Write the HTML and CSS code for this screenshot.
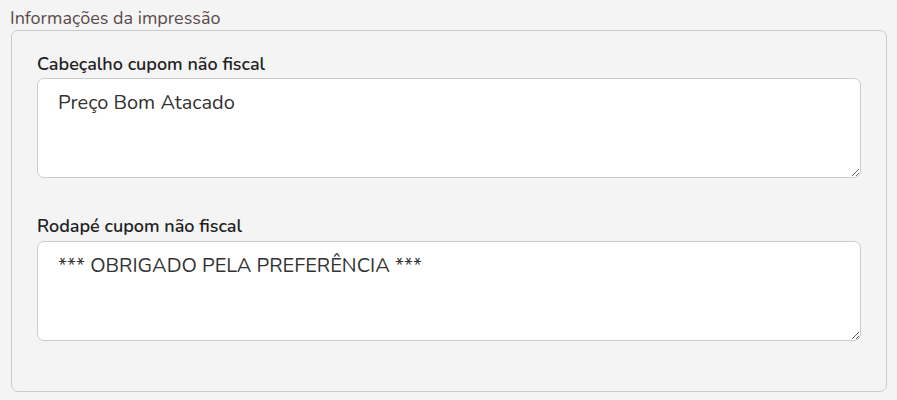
FILE: index.html
```html
<!DOCTYPE html>
<html lang="pt-BR">
<head>
<meta charset="utf-8">
<link rel="stylesheet" href="styles.css">
</head>
<body>
<section class="group">
  <div class="group-title">Informações da impressão</div>
  <div class="group-box">
    <div class="field">
      <label class="field-label" for="cab">Cabeçalho cupom não fiscal</label>
      <textarea id="cab" class="field-input">Preço Bom Atacado</textarea>
    </div>
    <div class="field">
      <label class="field-label" for="rod">Rodapé cupom não fiscal</label>
      <textarea id="rod" class="field-input">*** OBRIGADO PELA PREFERÊNCIA ***</textarea>
    </div>
  </div>
</section>
</body>
</html>
```

FILE: styles.css
```css
html, body {
  margin: 0;
  padding: 0;
  background: #f4f4f4;
}
body {
  font-family: "Nunito", "Noto Sans", "Open Sans", sans-serif;
  padding: 6px 10px 8px 11px;
}
.group-title {
  font-size: 18px;
  line-height: 24px;
  color: #5b4b4b;
  margin-left: -1px;
}
.group-box {
  border: 1px solid #cccccc;
  border-radius: 7px;
  padding: 21px 25px 50px 25px;
  display: flex;
  flex-direction: column;
  gap: 36px;
}
.field {
  display: flex;
  flex-direction: column;
  gap: 2px;
}
.field + .field .field-label {
  margin-bottom: 1px;
}
.field-label {
  font-size: 18px;
  line-height: 24px;
  font-weight: 600;
  color: #222;
}
.field-input {
  box-sizing: border-box;
  height: 100px;
  width: 100%;
  border: 1px solid #cccccc;
  border-radius: 7px;
  background: #fff;
  padding: 10px 20px;
  font-family: inherit;
  font-size: 20px;
  line-height: 27px;
  color: #333;
  resize: vertical;
  outline: none;
}
```
